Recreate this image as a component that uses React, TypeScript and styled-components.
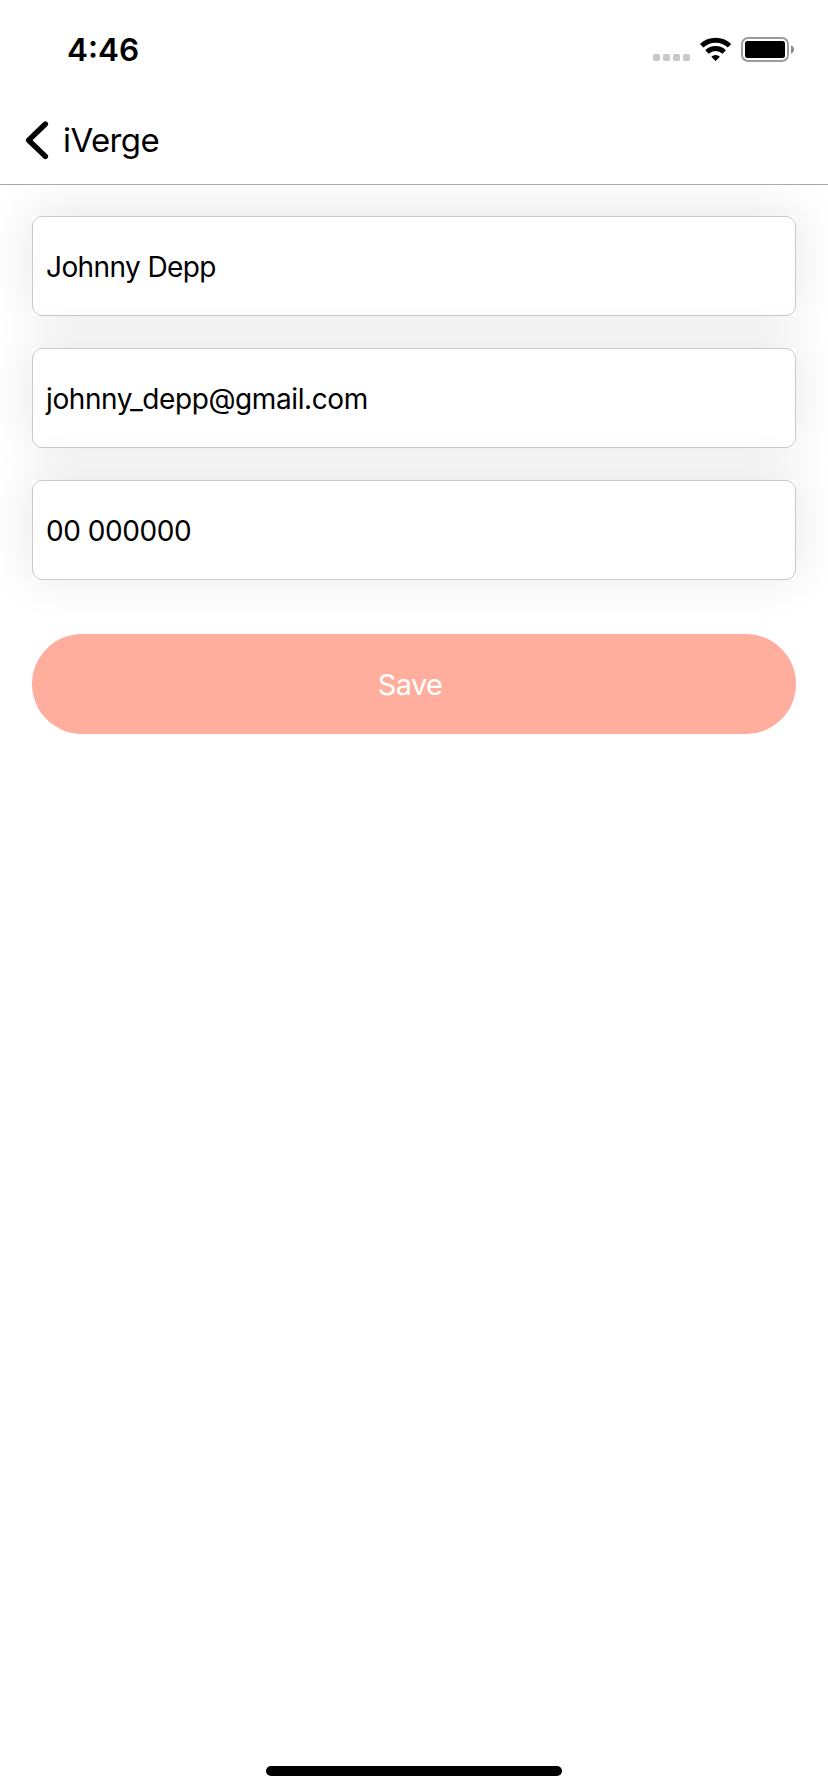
import React from "react";
import styled, { createGlobalStyle } from "styled-components";

const GlobalStyle = createGlobalStyle`
  * { box-sizing: border-box; }
  body {
    margin: 0;
    background: #fff;
    color: #000;
    font-family: Inter, "Liberation Sans", sans-serif;
    overflow: hidden;
  }
`;

const Screen = styled.div`
  display: flex;
  flex-direction: column;
  width: 828px;
  height: 1792px;
  background: #fff;
`;

const StatusBar = styled.div`
  display: flex;
  align-items: flex-start;
  justify-content: space-between;
  height: 96px;
  padding: 30px 33px 0 67px;
`;

const Time = styled.span`
  font-size: 31.5px;
  font-weight: 600;
  line-height: 40px;
`;

const StatusIcons = styled.svg`
  display: block;
  width: 143px;
  height: 40px;
`;

const NavBar = styled.header`
  display: flex;
  align-items: center;
  height: 89px;
  padding: 0 24px;
  border-bottom: 1px solid #a9a9a9;
  background: #fff;
`;

const BackButton = styled.button`
  display: flex;
  align-items: center;
  gap: 11px;
  padding: 0;
  border: 0;
  background: none;
  color: #000;
  font: inherit;
`;

const Chevron = styled.svg`
  display: block;
  width: 28px;
  height: 44px;
`;

const Title = styled.span`
  font-size: 33px;
  line-height: 42px;
  letter-spacing: -0.6px;
`;

const Form = styled.main`
  display: flex;
  flex: 1;
  flex-direction: column;
  gap: 32px;
  padding: 31px 32px 0;
  overflow: hidden;
`;

const FieldShell = styled.div`
  height: 100px;
  background: #fff;
  box-shadow: 0 -4px 50px rgba(0, 0, 0, 0.1);
`;

const Field = styled.div`
  display: flex;
  align-items: center;
  height: 100%;
  padding: 2px 13px 0;
  border: 1px solid #c8c8c8;
  border-radius: 10px;
`;

const Value = styled.span<{ $spacing: number }>`
  font-size: 28px;
  line-height: 36px;
  letter-spacing: ${(p) => p.$spacing}px;
`;

const SaveButton = styled.button`
  height: 100px;
  margin-top: 22px;
  padding: 0 8px 0 0;
  border: 0;
  border-radius: 50px;
  background: #ffad9d;
  color: #fff;
  font-family: inherit;
  font-size: 29px;
  font-weight: 400;
  letter-spacing: -0.6px;
`;

const HomeArea = styled.footer`
  display: flex;
  justify-content: center;
  height: 26px;
`;

const HomeIndicator = styled.div`
  width: 296px;
  height: 10px;
  border-radius: 5px;
  background: #000;
`;

const fields = [
  { text: "Johnny Depp", spacing: -0.6 },
  { text: "johnny_depp@gmail.com", spacing: -0.4 },
  { text: "00 000000", spacing: -0.45 },
];

export default function App() {
  return (
    <Screen>
      <GlobalStyle />
      <StatusBar>
        <Time>4:46</Time>
        <StatusIcons viewBox="652 30 143 40">
          {[653, 663, 673, 683].map((x) => (
            <rect key={x} x={x} y="54" width="7" height="7" rx="1.8" fill="#c8c8c8" />
          ))}
          <g fill="none" stroke="#000" strokeWidth="5">
            <path d="M701.7 45.8a20 20 0 0 1 27.8 0" />
            <path d="M707 52a12.3 12.3 0 0 1 17.2 0" />
          </g>
          <path d="M715.6 61l-4.3-4.3a6.4 6.4 0 0 1 8.6 0z" />
          <rect x="742" y="38" width="46" height="23" rx="6" fill="none" stroke="#9c9c9c" strokeWidth="2" />
          <rect x="745" y="41" width="40" height="17" rx="2.5" />
          <path d="M791 45.3c4 1.3 4 7.1 0 8.4z" fill="#8c8c8c" />
        </StatusIcons>
      </StatusBar>
      <NavBar>
        <BackButton>
          <Chevron viewBox="24 118 28 44">
            <path d="M45.4 124L28.6 140.2l16.8 16.2" fill="none" stroke="#000" strokeWidth="5.4" strokeLinecap="round" strokeLinejoin="round" />
          </Chevron>
          <Title>iVerge</Title>
        </BackButton>
      </NavBar>
      <Form>
        {fields.map((f) => (
          <FieldShell key={f.text}>
            <Field>
              <Value $spacing={f.spacing}>{f.text}</Value>
            </Field>
          </FieldShell>
        ))}
        <SaveButton>Save</SaveButton>
      </Form>
      <HomeArea>
        <HomeIndicator />
      </HomeArea>
    </Screen>
  );
}
